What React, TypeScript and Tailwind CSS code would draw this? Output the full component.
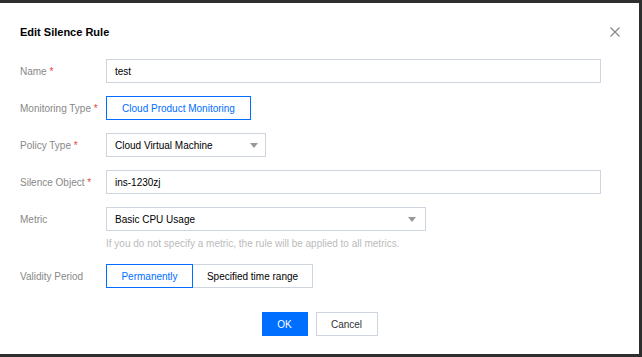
import React from 'react';

const Label = ({ text, required }: { text: string; required?: boolean }) => (
  <div className="w-[86px] shrink-0 text-[#888] whitespace-nowrap">
    {text}
    {required && <span className="text-[#e54545]"> *</span>}
  </div>
);

const Caret = () => (
  <svg width="8" height="5" viewBox="0 0 8 5" className="shrink-0">
    <polygon points="0,0 8,0 4,5" fill="#999" />
  </svg>
);

export default function App() {
  return (
    <div
      className="w-[642px] h-[357px] bg-[#2e2e2e] pt-[3px] pr-[3px] pb-[3px] text-[10px] text-black"
      style={{ fontFamily: '"Liberation Sans", Arial, sans-serif' }}
    >
      <div className="h-full bg-white px-[20px]">
        {/* header */}
        <div className="flex items-center justify-between pt-[21px] h-[37px] pr-[0px]">
          <h1 className="text-[11px] font-bold leading-[16px] text-black">Edit Silence Rule</h1>
          <svg width="10" height="10" viewBox="0 0 10 10" className="mr-[-1px]">
            <path d="M0.5 0.5 L9.5 9.5 M9.5 0.5 L0.5 9.5" stroke="#888" strokeWidth="1.2" />
          </svg>
        </div>

        {/* form */}
        <div className="mt-[19px] flex flex-col gap-[13px]">
          <div className="flex items-center">
            <Label text="Name" required />
            <div className="w-[495px] h-[24px] border border-[#cfd5de] flex items-center px-[8px]">test</div>
          </div>

          <div className="flex items-center">
            <Label text="Monitoring Type" required />
            <div className="w-[145px] h-[24px] border border-[#006eff] text-[#006eff] flex items-center justify-center">
              Cloud Product Monitoring
            </div>
          </div>

          <div className="flex items-center">
            <Label text="Policy Type" required />
            <div className="w-[160px] h-[24px] border border-[#cfd5de] flex items-center justify-between pl-[8px] pr-[7px]">
              <span>Cloud Virtual Machine</span>
              <Caret />
            </div>
          </div>

          <div className="flex items-center">
            <Label text="Silence Object" required />
            <div className="w-[495px] h-[24px] border border-[#cfd5de] flex items-center px-[8px]">ins-1230zj</div>
          </div>

          <div className="flex items-start">
            <div className="h-[24px] flex items-center">
              <Label text="Metric" />
            </div>
            <div className="flex flex-col">
              <div className="w-[320px] h-[24px] border border-[#cfd5de] flex items-center justify-between pl-[8px] pr-[9px]">
                <span>Basic CPU Usage</span>
                <Caret />
              </div>
              <div className="mt-[6px] leading-[14px] text-[#bbb]">
                If you do not specify a metric, the rule will be applied to all metrics.
              </div>
            </div>
          </div>

          <div className="flex items-center">
            <Label text="Validity Period" />
            <div className="flex">
              <div className="w-[87px] h-[24px] border border-[#006eff] text-[#006eff] flex items-center justify-center">
                Permanently
              </div>
              <div className="w-[120px] h-[24px] border border-l-0 border-[#cfd5de] flex items-center justify-center">
                Specified time range
              </div>
            </div>
          </div>
        </div>

        {/* footer */}
        <div className="mt-[24px] flex justify-center gap-[8px]">
          <button className="w-[46px] h-[24px] bg-[#006eff] text-white">OK</button>
          <button className="w-[62px] h-[24px] border border-[#cfd5de] bg-white text-[#333]">Cancel</button>
        </div>
      </div>
    </div>
  );
}
